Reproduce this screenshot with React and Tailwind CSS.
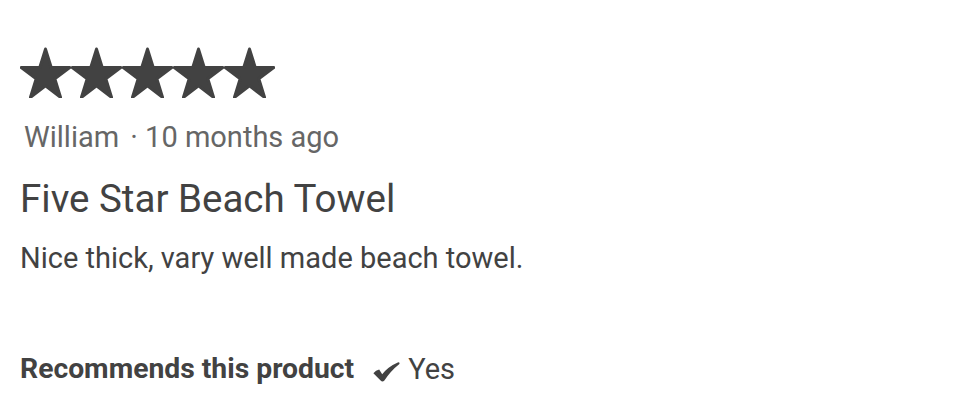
const stars = [0, 1, 2, 3, 4];

function Star() {
  return (
    <svg width="51" height="51" viewBox="0 0 100 96" preserveAspectRatio="none" className="shrink-0">
      <path
        d="M50 4 L61.2 38.6 L97.5 38.6 L68.2 59.9 L79.4 94.5 L50 73.1 L20.6 94.5 L31.8 59.9 L2.5 38.6 L38.8 38.6 Z"
        fill="#424242"
        stroke="#424242"
        strokeWidth="6"
        strokeLinejoin="round"
      />
    </svg>
  );
}

function Check() {
  return (
    <svg width="27" height="20" viewBox="0 0 27 20" className="shrink-0">
      <path
        d="M0.4 11.2 Q2.8 7.8 6.2 7.4 L9.2 12.2 Q15 4.6 24.8 0.4 Q27 0 26.4 2 Q17.5 9 11.4 18.6 Q9.4 20.6 7.6 18.6 Z"
        fill="#424242"
      />
    </svg>
  );
}

export default function App() {
  return (
    <div className="w-[960px] h-[411px] bg-white px-5 pt-[47px] text-[#424242] font-['Roboto',sans-serif]">
      <div className="flex h-[51px]">
        {stars.map((s) => (
          <Star key={s} />
        ))}
      </div>
      <div className="mt-[22px] pl-[4px] text-[29px] leading-[34px] text-[#666666]">
        William <span className="ml-1">· 10 months ago</span>
      </div>
      <h2 className="mt-[23px] text-[38.5px] leading-[44px]">Five Star Beach Towel</h2>
      <p className="mt-[20px] text-[29px] leading-[34px]">Nice thick, vary well made beach towel.</p>
      <div className="mt-[77px] flex items-center text-[28.3px] leading-[34px]">
        <span className="font-bold">Recommends this product</span>
        <span className="ml-[19px] mt-[5px] flex">
          <Check />
        </span>
        <span className="ml-[8px] text-[29px]">Yes</span>
      </div>
    </div>
  );
}
